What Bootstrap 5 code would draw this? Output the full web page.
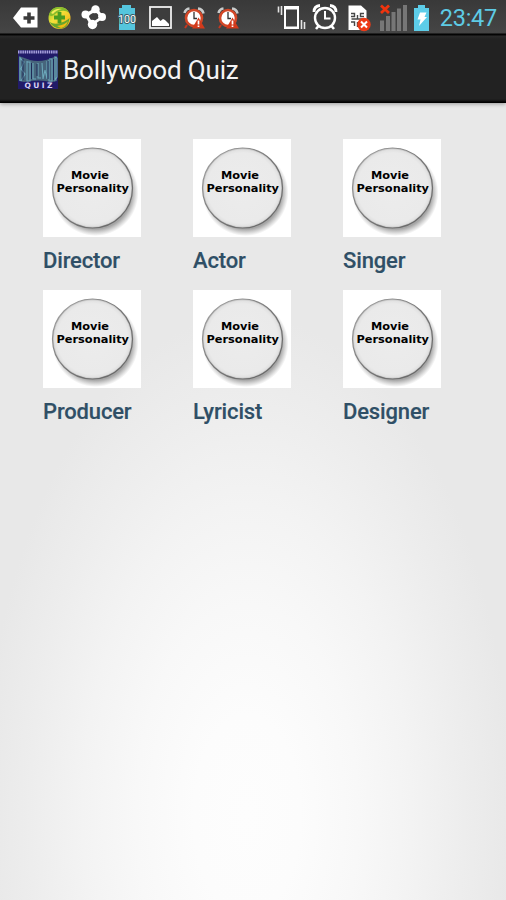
<!DOCTYPE html>
<html lang="en">
<head>
<meta charset="utf-8">
<meta name="viewport" content="width=device-width, initial-scale=1">
<title>Bollywood Quiz</title>
<link href="https://cdn.jsdelivr.net/npm/bootstrap@5.3.0/dist/css/bootstrap.min.css" rel="stylesheet">
<style>
body{font-family:Roboto,sans-serif;background:#e8e8e8}
.screen{height:900px;overflow:hidden;background:radial-gradient(ellipse 265px 500px at 247px 815px,#fdfdfd 0%,#fcfcfc 20%,#f8f8f8 42%,#f3f3f3 62%,#ededed 82%,#e8e8e8 100%)}
.statusbar{height:36px;background:linear-gradient(#393939 0,#454545 33px,#000 34px,#090909 35px,#2b2b2b 36px);padding-left:10px;padding-right:9px}
.statusbar svg{display:block;flex:none}
.icons-left{gap:4px}
.clock{color:#5ecbe5;font-size:23.5px;line-height:37px;letter-spacing:-.25px;margin-left:1px}
.appbar{height:67px;background:linear-gradient(#2a2a2a 0,#222 3px,#222 63px,#111 65px,#000 66px);padding:0 0 0 18px;box-shadow:0 1px 4px rgba(0,0,0,.35)}
.appname{font-size:26px;color:#f3f3f3;line-height:30px;letter-spacing:-.15px;margin-left:5px}
.tiles{padding:36px 13px 0 43px;row-gap:15px}
.tile{width:150px;height:136px}
.tile svg{display:block}
.caption{font-weight:500;font-size:22px;line-height:26px;letter-spacing:-.15px;-webkit-text-stroke:.15px #2f4f66;color:#2f4f66;margin-top:11px}
</style>
</head>
<body>
<svg width="0" height="0" class="position-absolute" aria-hidden="true">
<defs>
<linearGradient id="rim" x1="0" y1="0" x2="1" y2="1"><stop offset="0" stop-color="#aaa"/><stop offset=".5" stop-color="#777"/><stop offset="1" stop-color="#666"/></linearGradient>
<radialGradient id="face"><stop offset="0" stop-color="#ececec"/><stop offset=".88" stop-color="#eaeaea"/><stop offset=".95" stop-color="#e2e2e2"/><stop offset="1" stop-color="#bbb"/></radialGradient>
<radialGradient id="shade"><stop offset=".84" stop-color="#888" stop-opacity=".75"/><stop offset="1" stop-color="#999" stop-opacity="0"/></radialGradient>
<linearGradient id="ball" x1="0" y1="0" x2="1" y2="1"><stop offset="0" stop-color="#7fbd22"/><stop offset=".4" stop-color="#f2e13a"/><stop offset="1" stop-color="#f6a810"/></linearGradient>
<symbol id="disc" viewBox="0 0 98 98">
<rect width="98" height="98" fill="#fff"/>
<circle cx="52.500" cy="54" r="43" fill="url(#shade)"/>
<circle cx="49.500" cy="49" r="40" fill="url(#face)" stroke="url(#rim)" stroke-width="1.200"/>
<g font-family="'DejaVu Sans',sans-serif" font-weight="700" font-size="11" fill="#000">
<text x="28" y="39.500" textLength="38" lengthAdjust="spacingAndGlyphs">Movie</text>
<text x="13.500" y="53" textLength="72.500" lengthAdjust="spacingAndGlyphs">Personality</text>
</g>
</symbol>
<symbol id="snooze" viewBox="0 0 30 36">
<path d="M4.500 13q1-4 5-4.500M18 8.500q4.500.500 5.500 5" fill="none" stroke="#c9cccc" stroke-width="2.600"/>
<path d="M7 25l-2 3" stroke="#c6371f" stroke-width="2"/>
<circle cx="14" cy="18" r="8" fill="#fff" stroke="#d34727" stroke-width="2.600"/>
<path d="M14 12v6.500h3" fill="none" stroke="#333" stroke-width="1.300"/>
<path d="M18.500 17.500l6.500 11h-13z" fill="#d33a1b"/>
<path d="M18.500 20.500v4M18.500 25.500v1.500" stroke="#fff" stroke-width="1.700"/>
</symbol>
</defs>
</svg>
<main class="screen d-flex flex-column">
<div class="statusbar d-flex align-items-center justify-content-between flex-shrink-0">
<div class="icons-left d-flex">
<svg width="30" height="36"><path d="M3 18l8-10.500h16.500v20H11z" fill="#fff"/><path d="M19 12.500v11M13.500 18h11" stroke="#3b3b3b" stroke-width="3.600"/></svg>
<svg width="30" height="36"><circle cx="15.500" cy="18" r="11" fill="url(#ball)"/><path d="M5 15Q7 7 15 7q8 0 10 6-3-3-8-2-4 1-7 4-3 2-5 0z" fill="#86bd2c"/><path d="M7 13q4-5 11-4-6 1-9 5z" fill="#f5ec5a"/><path d="M5.500 22q5 3 10 1 6-1 10-5-1 8-6 10-9 2-14-6z" fill="#67a52d"/><path d="M13 26q8-1 11-5-2 6-7 7z" fill="#f4ba12"/><path d="M15.500 12v11M10 17.500h11" stroke="#4a9d20" stroke-width="3.800"/></svg>
<svg width="30" height="36"><path d="M8 15L18 9.500M8 15l6 9.500M18 9.500l6 7.500M14.500 24l9.500-7" stroke="#fff" stroke-width="3.200"/><g fill="#fff"><circle cx="17.500" cy="9.500" r="4.200"/><circle cx="7.500" cy="14.500" r="4"/><circle cx="14.500" cy="24.500" r="4.700"/><circle cx="24" cy="17" r="4"/></g><path d="M13 14l5.500-1 2 5-3.500 2.500-4-2z" fill="#404040"/></svg>
<svg width="30" height="36"><path d="M10 5h9v3h4v22H7V8h3z" fill="#55c5dd"/><text x="6" y="22.500" font-size="11.500" textLength="18" lengthAdjust="spacingAndGlyphs" font-family="Roboto,sans-serif" fill="#fff" stroke="#3a5a62" stroke-width="2" paint-order="stroke">100</text></svg>
<svg width="30" height="36"><rect x="4" y="7" width="21" height="21" fill="#3d3d3d" stroke="#efefef" stroke-width="1.800"/><path d="M6 26v-5l5-4 3.500 4 2.500-2 2 1 4 4v2z" fill="#fff"/></svg>
<svg width="30" height="36"><use href="#snooze"/></svg>
<svg width="30" height="36"><use href="#snooze"/></svg>
</div>
<div class="d-flex">
<svg width="34" height="36"><rect x="8" y="7" width="13" height="21" fill="none" stroke="#fff" stroke-width="2"/><path d="M7 6h15v3.500H7zM7 26.500h15V29H7z" fill="#fff"/><path d="M4.500 6v9M1.500 6.500v6M24.500 20v9M27.500 22v7" stroke="#e4e4e4" stroke-width="1.600"/></svg>
<svg width="34" height="36"><path d="M3 12q0-6 6-6.500M19 5.500q6 .500 6 6.500" fill="none" stroke="#fff" stroke-width="2.800"/><path d="M7.500 26L5 29M20.500 26l2.500 3" stroke="#fff" stroke-width="2.600"/><circle cx="14" cy="18" r="10" fill="none" stroke="#fff" stroke-width="2.400"/><path d="M14 11v7.500h5.500" fill="none" stroke="#fff" stroke-width="2"/></svg>
<svg width="33" height="36"><path d="M3.500 5.500H16l5.500 5V30h-18z" fill="#fff"/><path d="M6 13.500h3.500v3H6M19 13.500h-3.500v3H19M6 22h3.500v4M12.500 22v5M6.500 19h12M12.500 15v4" fill="none" stroke="#474747" stroke-width="1.400"/><circle cx="19" cy="24.500" r="6.700" fill="#ed3b17"/><path d="M16 21.500l6 6m0-6l-6 6" stroke="#fff" stroke-width="2"/></svg>
<svg width="34" height="36"><path d="M2 20.500h4V31H2zM8 16h4v15H8zM13.500 12h4v19h-4zM19 8.500h4V31h-4zM25 5h4v26h-4z" fill="#777"/><path d="M3 5.500l8 7.500m0-7.500L3 13" stroke="#f0340e" stroke-width="2.800"/></svg>
<svg width="27" height="36"><path d="M6 5h7v3h4v23H2V8h4z" fill="#5dcde9"/><path d="M8 12.500h6.500l-2 4.500H15l-8 9 1.500-6.500H5.500z" fill="#fff"/></svg>
<div class="clock">23:47</div>
</div>
</div>
<header class="appbar d-flex align-items-center flex-shrink-0">
<svg width="40" height="40" viewBox="0 0 40 40" class="flex-shrink-0">
<rect width="40" height="39" fill="#211b68"/>
<path d="M0 2h40" stroke="#a7a1dc" stroke-width="3" stroke-dasharray="1.500 .7"/>
<path d="M1 6l11 4q8 2 16 0l11-4v25l-5 1q-14-3-28 0l-5-1z" fill="#47657c"/>
<path d="M2 7v24M2 8l4 4-3 7 4 5-4 7M9 11v20h3V12H9M15 13v16h3M20 13v15h3M24 13l1 16 2-9 2 9V11M31 10v21h3V9h-3M37 7v23l2-3V8z" fill="none" stroke="#6ba8ba" stroke-width="1.100"/>
<path d="M5 9v21M13.500 13v16M19 14v12M30 11v18M35.500 9v21" stroke="#202a57" stroke-width="1"/>
<text x="6.500" y="38" textLength="28" font-family="'DejaVu Sans',sans-serif" font-weight="700" font-size="7.500" fill="#d6d2f4">QUIZ</text>
</svg>
<div class="appname">Bollywood Quiz</div>
</header>
<section class="tiles d-flex flex-wrap">
<div class="tile"><svg width="98" height="98"><use href="#disc"/></svg><div class="caption">Director</div></div>
<div class="tile"><svg width="98" height="98"><use href="#disc"/></svg><div class="caption">Actor</div></div>
<div class="tile"><svg width="98" height="98"><use href="#disc"/></svg><div class="caption">Singer</div></div>
<div class="tile"><svg width="98" height="98"><use href="#disc"/></svg><div class="caption">Producer</div></div>
<div class="tile"><svg width="98" height="98"><use href="#disc"/></svg><div class="caption">Lyricist</div></div>
<div class="tile"><svg width="98" height="98"><use href="#disc"/></svg><div class="caption">Designer</div></div>
</section>
</main>
<script src="https://cdn.jsdelivr.net/npm/bootstrap@5.3.0/dist/js/bootstrap.bundle.min.js"></script>
</body>
</html>
